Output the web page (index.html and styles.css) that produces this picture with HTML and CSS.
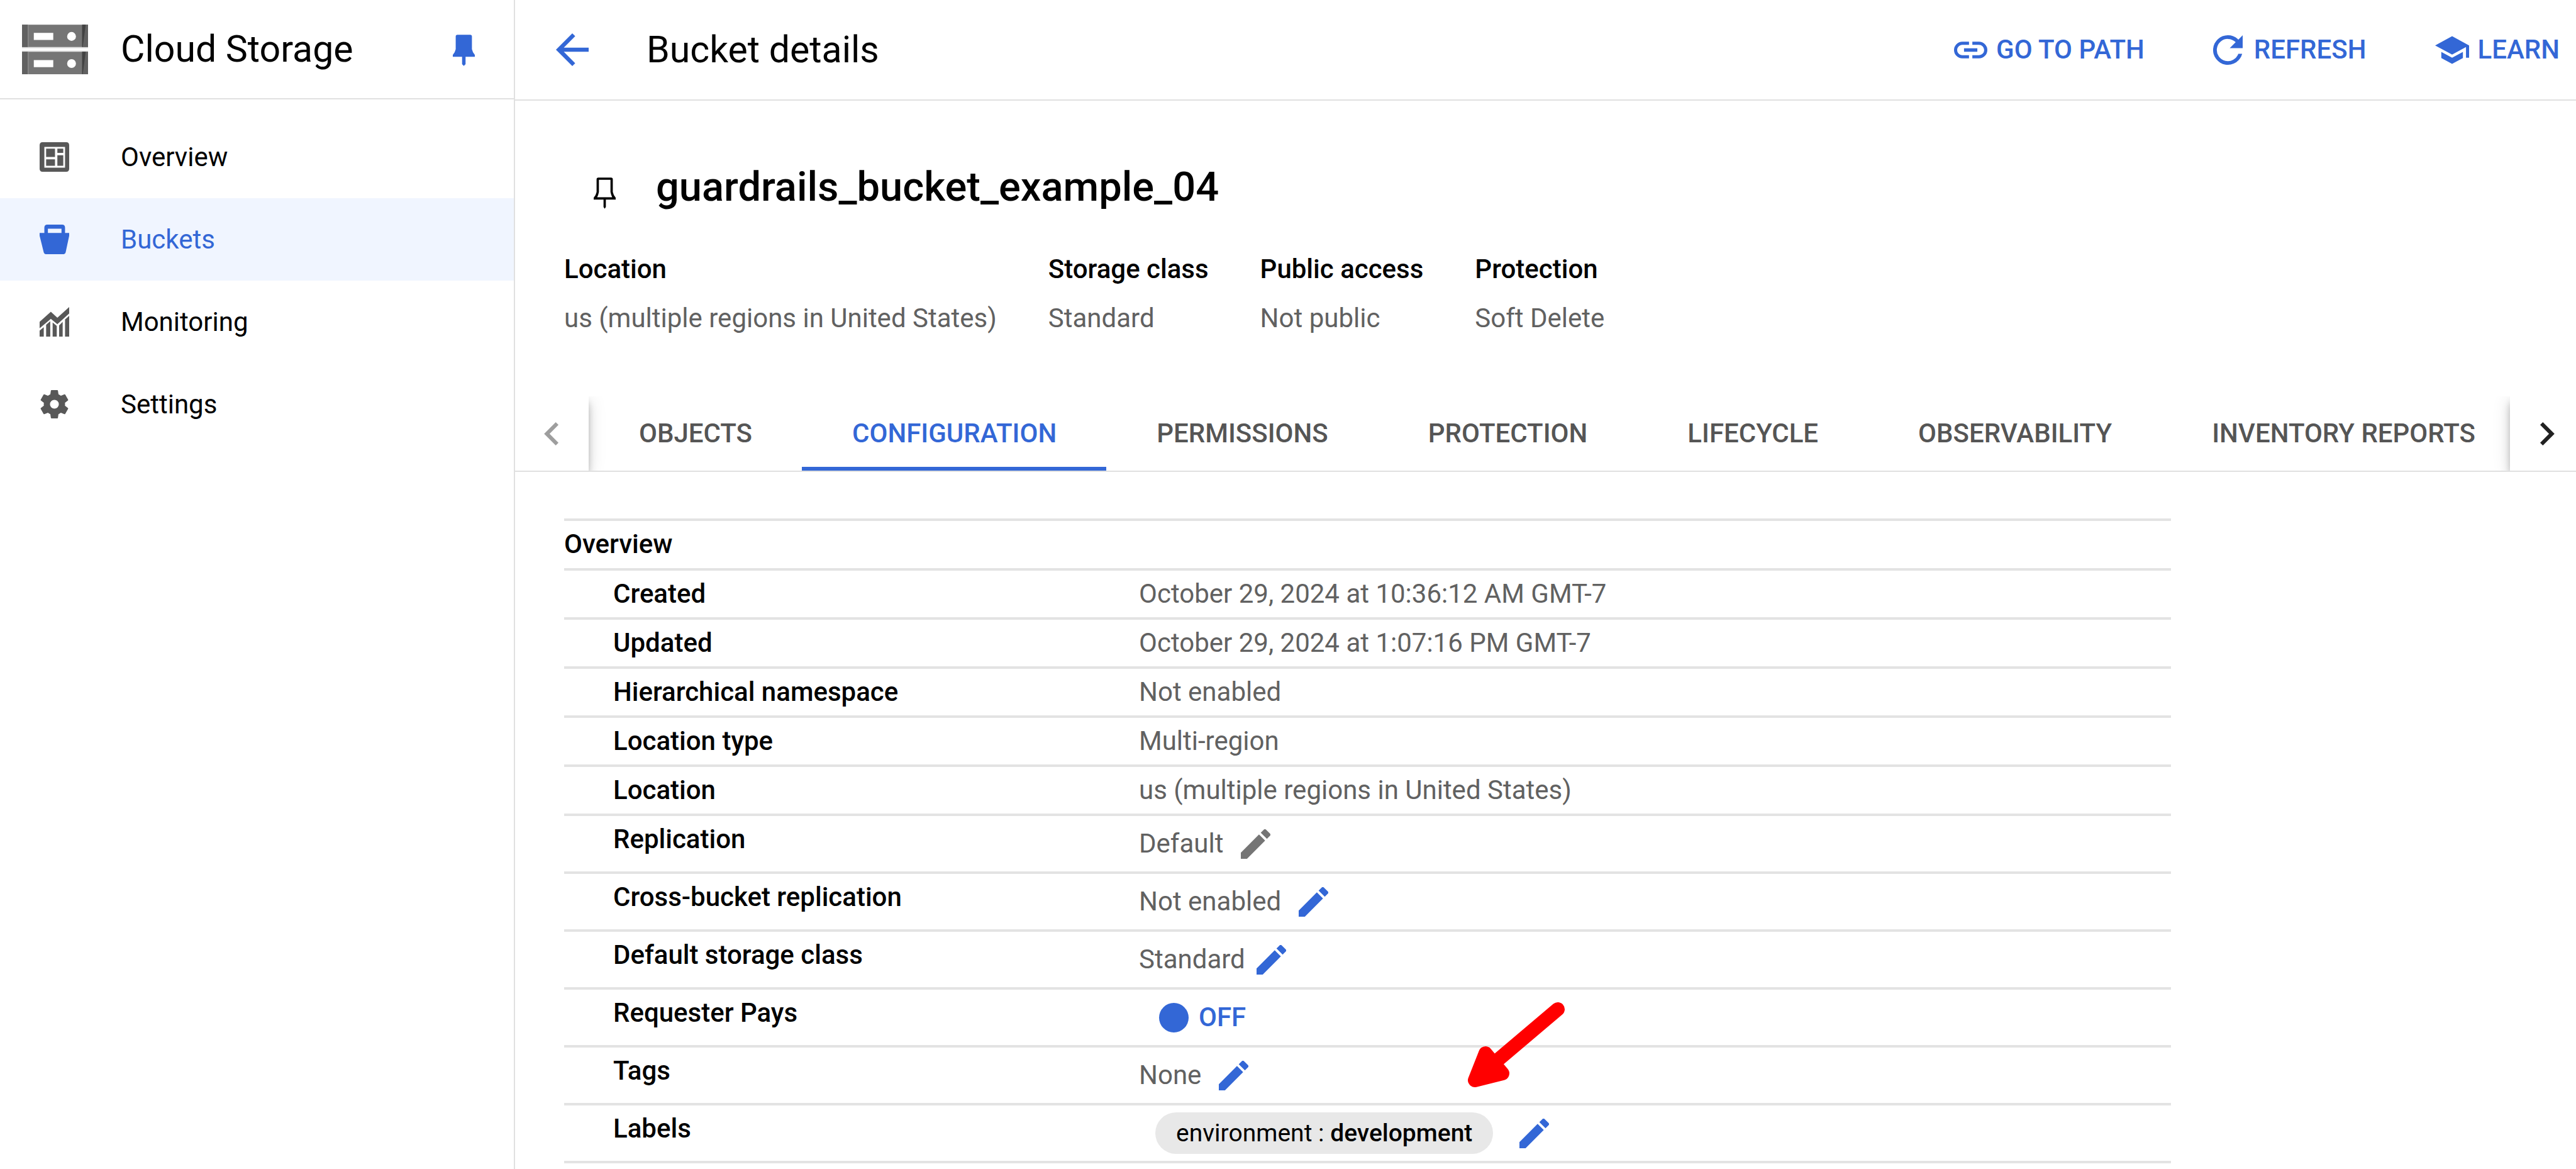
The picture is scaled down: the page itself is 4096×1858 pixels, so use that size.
FILE: index.html
```html
<!DOCTYPE html>
<html lang="en">
<head>
<meta charset="utf-8">
<title>Bucket details – Cloud Storage</title>
<link rel="stylesheet" href="styles.css">
</head>
<body>
<svg class="defs" aria-hidden="true">
  <symbol id="pencil" viewBox="3 3 18 18"><path d="M3 17.25V21h3.75L17.81 9.94l-3.75-3.75L3 17.25zM20.71 7.04a1 1 0 0 0 0-1.41l-2.34-2.34a1 1 0 0 0-1.41 0l-1.83 1.83 3.75 3.75 1.83-1.83z"/></symbol>
</svg>
<div class="app">
  <aside class="sidebar">
    <div class="product">
      <svg class="product-logo" viewBox="0 0 112 84" aria-hidden="true">
        <path fill="#e0e0e0" d="M0 38h112v2H0zM0 44h112v2H0z"/>
        <path fill="#757575" d="M0 0h112v38H0zM0 46h112v38H0z"/>
        <path fill="#616161" d="M0 0h10v38H0zM0 46h10v38H0zM102 0h10v38h-10zM102 46h10v38h-10z"/>
        <path fill="#424242" d="M102 0h6l-5 38h-1zM102 46h6l-5 38h-1z"/>
        <path fill="#9e9e9e" d="M10 0h1v38h-1zM10 46h1v38h-1z"/>
        <path fill="#fff" d="M20 14h33v12H20zM20 60h33v12H20z"/>
        <circle fill="#fff" cx="84" cy="20" r="7.500"/><circle fill="#fff" cx="84" cy="66" r="7.500"/>
      </svg>
      <span class="product-name">Cloud Storage</span>
      <button class="icon-button pin-menu" aria-label="Unpin menu">
        <svg class="pin" viewBox="0 0 38 54"><path d="M8 0h22q3 0 3 3v22q1 5 5 10v3H22v13l-3 3-3-3V38H0v-3q4-5 5-10V3q0-3 3-3z"/></svg>
      </button>
    </div>
    <nav class="nav">
      <a class="nav-item" href="#overview">
        <svg class="nav-icon" viewBox="0 0 50 50"><path fill-rule="evenodd" d="M5 0h40q5 0 5 5v40q0 5-5 5H5q-5 0-5-5V5q0-5 5-5zM8 8v35h35V8z"/><path d="M11 11h15v14H11zM30 11h10v7H30zM11 29h15v11H11zM30 22h10v18H30z"/></svg>
        <span>Overview</span>
      </a>
      <a class="nav-item active" href="#buckets" aria-current="page">
        <svg class="nav-icon" viewBox="0 0 50 50"><path fill-rule="evenodd" d="M13 0h25q5 0 5 5v9h7v5l-6 28q-1 3-3 3H10q-2 0-3-3L0 19v-5h8V5q0-5 5-5zM14 7v7h23V7z"/></svg>
        <span>Buckets</span>
      </a>
      <a class="nav-item" href="#monitoring">
        <svg class="nav-icon" viewBox="0 0 50 50"><path d="M0 25L19 8l11 10L50 0v11L30 29 19 20 0 36zM0 40l7-6v16H0zM11 30l7-6v26h-7zM22 26l7 6v18h-7zM33 31l6-6v25h-6zM43 21l7-6v35h-7z"/></svg>
        <span>Monitoring</span>
      </a>
      <a class="nav-item" href="#settings">
        <svg class="nav-icon" viewBox="2 2 20 20"><path d="M19.140 12.940c.04-.3.060-.61.060-.94 0-.32-.02-.64-.07-.94l2.030-1.580a.49.49 0 0 0 .12-.61l-1.920-3.320a.49.49 0 0 0-.59-.22l-2.390.96a7 7 0 0 0-1.620-.94l-.36-2.540A.48.48 0 0 0 13.920 2.400h-3.840a.48.48 0 0 0-.47.41l-.36 2.540c-.59.24-1.130.57-1.620.94l-2.390-.96a.48.48 0 0 0-.59.22L2.740 8.870a.48.48 0 0 0 .12.61l2.030 1.580c-.05.3-.09.63-.09.94s.02.64.07.94l-2.030 1.580a.49.49 0 0 0-.12.61l1.920 3.320c.12.22.37.29.59.22l2.390-.96c.5.38 1.030.7 1.620.94l.36 2.540c.05.24.24.41.48.41h3.840c.24 0 .44-.17.47-.41l.36-2.540c.59-.24 1.130-.56 1.620-.94l2.390.96c.22.08.47 0 .59-.22l1.920-3.320a.48.48 0 0 0-.12-.61l-2.010-1.580zM12 15a3 3 0 1 1 0-6 3 3 0 0 1 0 6z"/></svg>
        <span>Settings</span>
      </a>
    </nav>
  </aside>

  <main class="main">
    <header class="topbar">
      <button class="icon-button" aria-label="Back">
        <svg class="back" viewBox="4 4 16 16"><path d="M20 11H7.830l5.590-5.590L12 4l-8 8 8 8 1.410-1.410L7.830 13H20v-2z"/></svg>
      </button>
      <span class="page-name">Bucket details</span>
      <div class="actions">
        <button class="action">
          <svg class="link-icon" viewBox="2 7 20 10"><path d="M3.900 12c0-1.710 1.390-3.100 3.100-3.100h4V7H7a5 5 0 0 0 0 10h4v-1.900H7c-1.710 0-3.100-1.390-3.100-3.100zM8 13h8v-2H8v2zm9-6h-4v1.900h4a3.100 3.100 0 0 1 0 6.200h-4V17h4a5 5 0 0 0 0-10z"/></svg>
          GO TO PATH
        </button>
        <button class="action">
          <svg class="refresh-icon" viewBox="4 4 16 16"><path d="M17.650 6.350A7.960 7.960 0 0 0 12 4a8 8 0 1 0 7.730 10h-2.080A6 6 0 1 1 12 6c1.660 0 3.140.69 4.220 1.780L13 11h7V4l-2.350 2.350z"/></svg>
          REFRESH
        </button>
        <button class="action">
          <svg class="learn-icon" viewBox="1 3 22 18"><path d="M5 13.180v4L12 21l7-3.820v-4L12 17l-7-3.820zM12 3L1 9l11 6 9-4.910V17h2V9L12 3z"/></svg>
          LEARN
        </button>
      </div>
    </header>

    <section class="summary">
      <div class="heading">
        <button class="icon-button pin-bucket" aria-label="Pin bucket">
          <svg class="pin" viewBox="0 0 38 54"><path fill-rule="evenodd" d="M8 0h22q3 0 3 3v22q1 5 5 10v3H21v13l-2 3-2-3V38H0v-3q4-5 5-10V3q0-3 3-3zM9 4v21q-1 5-3 9h26q-2-4-3-9V4z"/></svg>
        </button>
        <h1>guardrails_bucket_example_04</h1>
      </div>
      <dl class="facts">
        <div><dt>Location</dt><dd>us (multiple regions in United States)</dd></div>
        <div><dt>Storage class</dt><dd>Standard</dd></div>
        <div><dt>Public access</dt><dd>Not public</dd></div>
        <div><dt>Protection</dt><dd>Soft Delete</dd></div>
      </dl>
    </section>

    <div class="tabs">
      <button class="tab-arrow prev" aria-label="Previous tabs" disabled>
        <svg class="chevron" viewBox="8 6 8 12"><path d="M15.410 7.410L14 6l-6 6 6 6 1.410-1.410L10.830 12z"/></svg>
      </button>
      <div class="tab-list" role="tablist">
        <button class="tab" role="tab">OBJECTS</button>
        <button class="tab selected" role="tab" aria-selected="true">CONFIGURATION</button>
        <button class="tab" role="tab">PERMISSIONS</button>
        <button class="tab" role="tab">PROTECTION</button>
        <button class="tab" role="tab">LIFECYCLE</button>
        <button class="tab" role="tab">OBSERVABILITY</button>
        <button class="tab" role="tab">INVENTORY REPORTS</button>
      </div>
      <button class="tab-arrow next" aria-label="Next tabs">
        <svg class="chevron" viewBox="8 6 8 12"><path d="M10 6L8.590 7.410 13.170 12l-4.580 4.590L10 18l6-6z"/></svg>
      </button>
    </div>

    <section class="config">
      <div class="config-body">
        <table class="props">
          <colgroup><col class="name-col"><col></colgroup>
          <thead><tr><th colspan="2" scope="colgroup">Overview</th></tr></thead>
          <tbody>
            <tr><th scope="row">Created</th><td>October 29, 2024 at 10:36:12 AM GMT-7</td></tr>
            <tr><th scope="row">Updated</th><td>October 29, 2024 at 1:07:16 PM GMT-7</td></tr>
            <tr><th scope="row">Hierarchical namespace</th><td>Not enabled</td></tr>
            <tr><th scope="row">Location type</th><td>Multi-region</td></tr>
            <tr><th scope="row">Location</th><td>us (multiple regions in United States)</td></tr>
          </tbody>
          <tbody class="editable">
            <tr><th scope="row">Replication</th><td><div class="value">Default <button class="icon-button edit muted" aria-label="Edit replication"><svg class="pencil"><use href="#pencil"/></svg></button></div></td></tr>
            <tr><th scope="row">Cross-bucket replication</th><td><div class="value">Not enabled <button class="icon-button edit" aria-label="Edit cross-bucket replication"><svg class="pencil"><use href="#pencil"/></svg></button></div></td></tr>
            <tr><th scope="row">Default storage class</th><td><div class="value tight">Standard <button class="icon-button edit" aria-label="Edit default storage class"><svg class="pencil"><use href="#pencil"/></svg></button></div></td></tr>
            <tr><th scope="row">Requester Pays</th><td><div class="value"><button class="toggle" role="switch" aria-checked="false"><span class="knob"></span>OFF</button></div></td></tr>
            <tr><th scope="row">Tags</th><td><div class="value">None <button class="icon-button edit" aria-label="Edit tags"><svg class="pencil"><use href="#pencil"/></svg></button></div></td></tr>
            <tr><th scope="row">Labels</th><td><div class="value wide"><span class="chip">environment : <b>development</b></span><button class="icon-button edit" aria-label="Edit labels"><svg class="pencil"><use href="#pencil"/></svg></button></div></td></tr>
          </tbody>
        </table>
        <svg class="pointer" viewBox="0 0 164 144" aria-hidden="true">
          <path d="M32 84L15 127l44-11z" fill="#f00"/>
          <path d="M147 14L36 108M32 84L15 127l44-11z" fill="none" stroke="#f00" stroke-width="22" stroke-linecap="round" stroke-linejoin="round"/>
        </svg>
      </div>
    </section>
  </main>
</div>
</body>
</html>
```
FILE: styles.css
```css
:root {
  --blue: #3367d6;
  --line: #e0e0e0;
  --muted: #616161;
  --gutter: 78px;
}

* { box-sizing: border-box; }

body {
  margin: 0;
  background: #fff;
  color: #000;
  font: 400 42px/78px Roboto, "Liberation Sans", sans-serif;
}

button {
  margin: 0;
  padding: 0;
  border: 0;
  background: none;
  color: inherit;
  font: inherit;
}

svg { display: block; flex: none; fill: currentColor; }

.defs { position: absolute; width: 0; height: 0; }

.app { display: flex; min-height: 100vh; }

.icon-button { display: flex; color: var(--blue); }

/* Sidebar */
.sidebar {
  flex: none;
  width: 819px;
  border-right: 2px solid var(--line);
}

.product {
  display: flex;
  align-items: center;
  height: 158px;
  padding: 0 62px 0 35px;
  border-bottom: 2px solid var(--line);
}

.product-logo { width: 105px; height: 79px; }
.product-name { margin-left: 52px; font-size: 59px; }
.pin { width: 35px; height: 50px; }
.pin-menu { margin-left: auto; padding-top: 4px; }

.nav { padding-top: 26px; }

.nav-item {
  display: flex;
  align-items: center;
  gap: 82px;
  height: 131px;
  padding-left: 63px;
  color: #000;
  text-decoration: none;
}

.nav-icon { width: 47px; height: 47px; color: #585858; }
.nav-item.active { background: #f0f5ff; color: var(--blue); }
.nav-item.active .nav-icon { color: var(--blue); }

/* Top bar */
.main { flex: 1; min-width: 0; }

.topbar {
  display: flex;
  align-items: center;
  height: 160px;
  padding: 0 26px 0 65px;
  border-bottom: 2px solid var(--line);
}

.back { width: 52px; height: 52px; }
.page-name { margin-left: 92px; font-size: 59px; }

.actions { display: flex; gap: 109px; margin-left: auto; }

.action {
  display: flex;
  align-items: center;
  gap: 14px;
  color: var(--blue);
  font-weight: 500;
  white-space: nowrap;
}

.link-icon { width: 53px; height: 27px; }
.refresh-icon { width: 47px; height: 47px; margin-right: 4px; }
.learn-icon { width: 54px; height: 45px; }

/* Bucket summary */
.summary { padding: 95px var(--gutter) 85px; }

.heading { display: flex; align-items: flex-end; padding-left: 47px; }
.pin-bucket { padding-bottom: 7px; color: #000; }

h1 {
  margin: 0 0 0 64px;
  font-size: 65px;
  font-weight: 500;
  line-height: 84px;
}

.facts { display: flex; gap: 82px; margin: 50px 0 0; }
.facts dt { font-weight: 500; }
.facts dd { margin: 0; color: var(--muted); }

/* Tabs */
.tabs {
  display: flex;
  height: 120px;
  border-bottom: 2px solid var(--line);
  overflow: hidden;
}

.tab-arrow {
  position: relative;
  z-index: 1;
  display: flex;
  flex: none;
  align-items: center;
  justify-content: center;
  width: 117px;
  background: #fff;
  box-shadow: 0 6px 11px -3px rgba(0, 0, 0, .2), 0 14px 14px rgba(0, 0, 0, .14), 0 3px 28px rgba(0, 0, 0, .12);
  color: #212121;
}

.tab-arrow.prev { color: #9e9e9e; }
.tab-arrow.next { margin-right: -12px; }
.chevron { width: 25px; height: 37px; }

.tab-list { display: flex; flex: 1; min-width: 0; overflow: hidden; }

.tab {
  flex: none;
  padding: 6px 79px 0 80px;
  border-bottom: 6px solid transparent;
  color: #555;
  font-weight: 500;
}

.tab.selected { border-color: var(--blue); color: var(--blue); }

/* Configuration table */
.config { padding: 74px var(--gutter) 0; }
.config-body { position: relative; max-width: 2555px; }

.props {
  width: 100%;
  border-collapse: separate;
  border-spacing: 0;
  table-layout: fixed;
  border-bottom: 4px solid #e3e3e3;
}

.name-col { width: 914px; }

.props th, .props td {
  height: 78px;
  padding: 0;
  border-top: 4px solid #e3e3e3;
  line-height: 74px;
  text-align: left;
}

.props th { font-weight: 500; vertical-align: top; }
.props thead th { height: 79px; }
.props td { color: var(--muted); }
.props tbody th { padding-left: var(--gutter); }
.props .editable th, .props .editable td { height: 92px; }

.value { display: flex; align-items: center; gap: 28px; }
.value.tight { gap: 18px; }
.value.wide { gap: 42px; }

.pencil { width: 47px; height: 47px; }
.edit.muted { color: #757575; }

.toggle {
  display: flex;
  align-items: center;
  gap: 16px;
  padding-left: 32px;
  color: var(--blue);
  font-weight: 500;
}

.knob { width: 47px; height: 47px; border-radius: 50%; background: currentColor; }

.chip {
  margin-left: 26px;
  padding: 0 33px;
  border-radius: 33px;
  background: #e8e8e8;
  color: #000;
  font-size: 39px;
  line-height: 66px;
}

.chip b { font-weight: 500; }

/* Callout arrow over the tags and labels rows */
.pointer {
  position: absolute;
  top: 766px;
  left: 1433px;
  width: 164px;
  height: 144px;
}
```
